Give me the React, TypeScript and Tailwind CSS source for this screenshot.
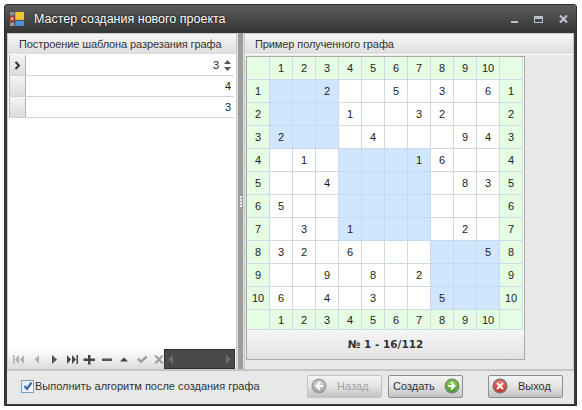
import React from "react";

const F = { fontFamily: '"Liberation Sans", "DejaVu Sans", sans-serif' };

const data: Record<string, number>[] = [
  { 3: 2, 6: 5, 8: 3, 10: 6 },
  { 4: 1, 7: 3, 8: 2 },
  { 1: 2, 5: 4, 9: 9, 10: 4 },
  { 2: 1, 7: 1, 8: 6 },
  { 3: 4, 9: 8, 10: 3 },
  { 1: 5 },
  { 2: 3, 4: 1, 9: 2 },
  { 1: 3, 2: 2, 4: 6, 10: 5 },
  { 3: 9, 5: 8, 7: 2 },
  { 1: 6, 3: 4, 5: 3, 8: 5 },
];
const nums = [1, 2, 3, 4, 5, 6, 7, 8, 9, 10];

function isBlue(r: number, c: number) {
  return (r <= 3 && c <= 3) || (r >= 4 && r <= 7 && c >= 4 && c <= 7) || (r >= 8 && c >= 8);
}

function Hdr({ v, last }: { v?: number; last?: boolean }) {
  return (
    <div
      className={`flex w-[23px] items-center justify-center border-r border-b border-[#cfd8e6] bg-[#e5fde3] pt-[1px] text-[11px] text-[#1c1c1c] ${
        last ? "h-[20px]" : "h-[23px]"
      }`}
    >
      {v}
    </div>
  );
}

function Header({ text, pad }: { text: string; pad: string }) {
  return (
    <div className={`flex h-[21px] shrink-0 items-center border-b border-white bg-gradient-to-b from-[#f6f6f6] to-[#dedede] text-[11px] tracking-[-0.1px] text-[#333] ${pad}`}>
      {text}
    </div>
  );
}

function Row({ v, active, spin }: { v: number; active?: boolean; spin?: boolean }) {
  return (
    <div className="ml-[1px] mr-[2px] flex h-[21px] border-b border-[#ccd3e0] bg-white">
      <div className="flex w-[17px] shrink-0 items-center justify-center border-x border-[#b4b4b4] bg-gradient-to-b from-[#f4f4f4] to-[#dcdcdc]">
        {active && (
          <svg width="7" height="9" viewBox="0 0 7 9">
            <path d="M1.5 1 L5 4.5 L1.5 8" fill="none" stroke="#333" strokeWidth="2" />
          </svg>
        )}
      </div>
      <div className={`flex flex-1 items-center justify-end text-[11px] text-[#222] ${spin ? "pr-[15px]" : "pr-[3px]"}`}>{v}</div>
      {spin && (
        <div className="-ml-[13px] flex w-[13px] flex-col items-center justify-center gap-[3px]">
          <svg width="7" height="4" viewBox="0 0 7 4"><path d="M3.5 0 L7 4 H0 Z" fill="#555" /></svg>
          <svg width="7" height="4" viewBox="0 0 7 4"><path d="M0 0 H7 L3.5 4 Z" fill="#555" /></svg>
        </div>
      )}
    </div>
  );
}

function NavIcon({ d, c }: { d: string; c: string }) {
  return (
    <svg width="14" height="11" viewBox="0 0 14 11" className="shrink-0">
      <path d={d} fill={c} />
    </svg>
  );
}

function Btn({ children, w, disabled }: { children: React.ReactNode; w: string; disabled?: boolean }) {
  return (
    <div
      className={`flex h-[23px] items-center rounded-[2px] border bg-gradient-to-b from-[#f3f3f3] via-[#e4e4e4] to-[#c2c2c2] text-[11px] ${w} ${
        disabled ? "border-[#c4c4c4] text-[#a2a2a2]" : "border-[#8f8f8f] text-[#333]"
      }`}
    >
      {children}
    </div>
  );
}

function Round({ from, to, ring, d }: { from: string; to: string; ring: string; d: string }) {
  const id = from.replace("#", "g");
  return (
    <svg width="16" height="16" viewBox="0 0 16 16" className="shrink-0">
      <defs>
        <linearGradient id={id} x1="0" y1="0" x2="0" y2="1">
          <stop offset="0" stopColor={from} />
          <stop offset="1" stopColor={to} />
        </linearGradient>
      </defs>
      <circle cx="8" cy="8" r="7.5" fill={ring} />
      <circle cx="8" cy="8" r="5.8" fill={`url(#${id})`} />
      <path d={d} fill="none" stroke="#fff" strokeWidth="2" />
    </svg>
  );
}

export default function App() {
  return (
    <div className="h-[410px] w-[582px] bg-white p-[4px] pr-[5px]" style={F}>
      <div className="flex h-full flex-col rounded-t-[3px] border border-[#2e2e2e] bg-[#3a3a3a]">
        {/* title bar */}
        <div className="flex h-[28px] shrink-0 items-center bg-gradient-to-b from-[#5c5c5c] via-[#484848] to-[#353535] pl-[5px] pr-[5px]">
          <svg width="14" height="14" viewBox="0 0 16 16" className="shrink-0">
            <rect x="0" y="0" width="5" height="4" fill="#8d8d8d" />
            <rect x="6" y="0" width="10" height="9" fill="#f2c431" />
            <rect x="0" y="5" width="5" height="6" fill="#d6403a" />
            <rect x="1.5" y="6.5" width="2" height="2" fill="#fff" />
            <rect x="0" y="12" width="5" height="4" fill="#9b9b9b" />
            <rect x="6" y="10" width="10" height="6" fill="#4f8fd8" />
          </svg>
          <span className="ml-[10px] text-[12.5px] text-white [text-shadow:0_0_2px_#000]">Мастер создания нового проекта</span>
          <div className="ml-auto flex items-center gap-[16px] pr-[3px]">
            <div className="mt-[6px] h-[2px] w-[7px] bg-[#b9c2cc]" />
            <div className="h-[7px] w-[9px] border border-t-[3px] border-[#b9c2cc]" />
            <svg width="9" height="8" viewBox="0 0 9 8">
              <path d="M1 0.5 L8 7.5 M8 0.5 L1 7.5" stroke="#b9c2cc" strokeWidth="2.2" />
            </svg>
          </div>
        </div>

        {/* client */}
        <div className="mx-[2px] mb-[1px] flex min-h-0 flex-1 flex-col bg-[#e8e8e8]">
          <div className="flex min-h-0 flex-1 border-b-[2px] border-[#c6c6c6]">
            {/* left panel */}
            <div className="flex w-[230px] shrink-0 flex-col border border-b-0 border-[#c8c8c8] bg-white">
              <Header text="Построение шаблона разрезания графа" pad="pl-[11px]" />
              <div className="flex-1">
                <Row v={3} active spin />
                <Row v={4} />
                <Row v={3} />
              </div>
              <div className="mr-[1px] flex h-[20px] shrink-0">
                <div className="flex min-w-0 flex-1 items-center gap-[3.5px] bg-gradient-to-b from-white to-[#dcdcdc] pl-[4px]">
                  <NavIcon c="#b0b0b0" d="M1 1h1.5v9H1zM7 1v9L3 5.5zM12 1v9L8 5.5z" />
                  <NavIcon c="#b0b0b0" d="M9 1v9L4.5 5.5z" />
                  <NavIcon c="#555" d="M5 1v9l5-4.5z" />
                  <NavIcon c="#444" d="M2 1v9l4-4.5zM7 1v9l4-4.5zM11.5 1H13v9h-1.5z" />
                  <NavIcon c="#444" d="M6 1h2.5v3.5H13V7H8.5v3.5H6V7H1.5V4.5H6z" />
                  <NavIcon c="#555" d="M2 4.5h10V7H2z" />
                  <NavIcon c="#444" d="M3 7.5 L7 3.5 L11 7.5z" />
                  <NavIcon c="#a0a0a0" d="M2 5.5 L4 4 L6 6 L11 1.5 L12.5 3.5 L6 9.5z" />
                  <NavIcon c="#a0a0a0" d="M2 1.5h3L7 4l2-2.5h3L8.5 5.5l3.5 4H9L7 7l-2 2.5H2l3.5-4z" />
                </div>
                <div className="flex w-[71px] shrink-0 items-center justify-between border border-[#2f2f2f] bg-[#4a4a4a] px-[3px]">
                  <svg width="6" height="11" viewBox="0 0 6 11"><path d="M5 0.5v10L0.5 5.5z" fill="#6b6b6b" /></svg>
                  <svg width="6" height="11" viewBox="0 0 6 11"><path d="M1 0.5v10L5.5 5.5z" fill="#6b6b6b" /></svg>
                </div>
              </div>
            </div>

            {/* splitter */}
            <div className="flex w-[7px] shrink-0 flex-col items-center justify-center gap-[1px] border-x border-[#e0e0e0] bg-[#9d9d9d]">
              {[0, 1, 2, 3].map((i) => (
                <div key={i} className="h-[2px] w-[2px] bg-[#eee]" />
              ))}
            </div>

            {/* right panel */}
            <div className="flex min-w-0 flex-1 flex-col border border-b-0 border-[#c8c8c8]">
              <Header text="Пример полученного графа" pad="pl-[10px]" />
              <div className="flex-1 pl-[1px] pt-[1px]">
                <div className="w-[279px] border border-[#a9a9a9] bg-white">
                  <div className="flex">
                    <Hdr />
                    {nums.map((n) => <Hdr key={n} v={n} />)}
                    <Hdr />
                  </div>
                  {data.map((row, i) => (
                    <div key={i} className="flex">
                      <Hdr v={i + 1} />
                      {nums.map((c) => (
                        <div
                          key={c}
                          className={`flex h-[23px] w-[23px] items-center justify-center border-r border-b pt-[1px] text-[11px] text-[#1c1c1c] ${
                            isBlue(i + 1, c) ? "border-[#c8d9ee] bg-[#d0e6ff]" : "border-[#cfd8e6] bg-white"
                          }`}
                        >
                          {row[c]}
                        </div>
                      ))}
                      <Hdr v={i + 1} />
                    </div>
                  ))}
                  <div className="flex">
                    <Hdr last />
                    {nums.map((n) => <Hdr key={n} v={n} last />)}
                    <Hdr last />
                  </div>
                  <div
                    className="flex h-[29px] items-center justify-center bg-gradient-to-b from-[#f6f6f6] to-[#e2e2e2] text-[10.5px] font-bold text-[#333]"
                    style={{ fontFamily: '"DejaVu Sans", sans-serif' }}
                  >
                    № 1 - 16/112
                  </div>
                </div>
              </div>
            </div>
          </div>

          {/* footer */}
          <div className="flex h-[33px] shrink-0 items-center pb-[3px] pl-[14px] pr-[11px]">
            <div className="flex h-[13px] w-[13px] items-center justify-center border border-[#7f9db9] bg-gradient-to-br from-[#dfe8f4] to-white">
              <svg width="10" height="10" viewBox="0 0 10 10">
                <path d="M1.5 5 L4 8 L8.5 1.5" fill="none" stroke="#3c62b8" strokeWidth="2.2" />
              </svg>
            </div>
            <span className="ml-[1px] text-[11px] text-[#333]">Выполнить алгоритм после создания графа</span>
            <div className="ml-auto flex items-center">
              <Btn w="w-[75px] pl-[3px] gap-[10px]" disabled>
                <Round from="#d8d8d8" to="#a8a8a8" ring="#9e9e9e" d="M9 4.5 L5.5 8 L9 11.5 M6 8 H12" />
                <span>Назад</span>
              </Btn>
              <div className="w-[6px]" />
              <Btn w="w-[75px] pl-[4px] gap-[9px]">
                <span>Создать</span>
                <Round from="#8fdc4a" to="#3f9a1c" ring="#6f8f6a" d="M7 4.5 L10.5 8 L7 11.5 M4 8 H10" />
              </Btn>
              <div className="w-[25px]" />
              <Btn w="w-[75px] pl-[3px] gap-[10px]">
                <Round from="#f37d6e" to="#d52a1e" ring="#8b6a68" d="M5 5 L11 11 M11 5 L5 11" />
                <span>Выход</span>
              </Btn>
            </div>
          </div>
        </div>
      </div>
    </div>
  );
}
